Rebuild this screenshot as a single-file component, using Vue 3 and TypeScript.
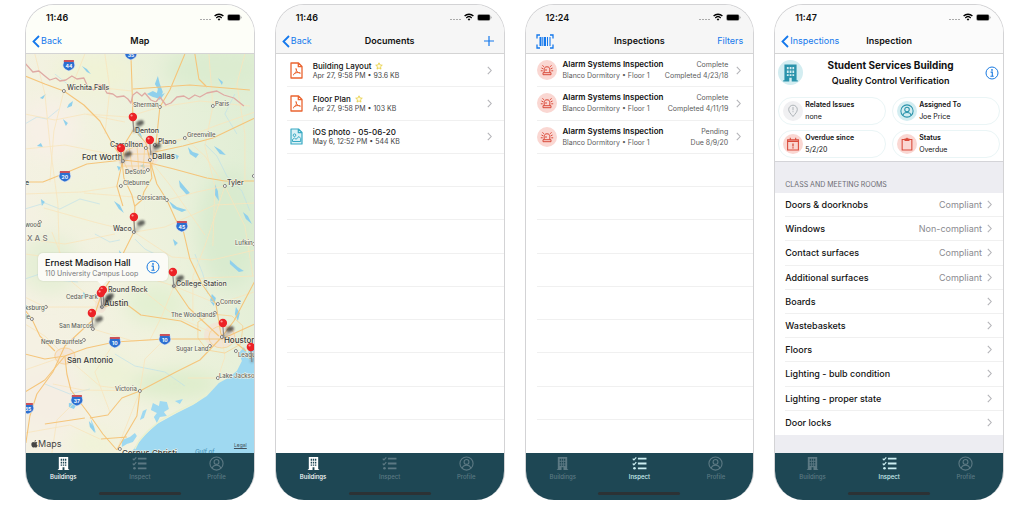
<script setup lang="ts">
interface Screen {
  kind: 'map' | 'documents' | 'inspections' | 'inspection'
  time: string
  title: string
  back?: string
  tab: string
}
interface Place {
  t: string
  x: number
  y: number
  c?: string
}

const screens: Screen[] = [
  { kind: 'map', time: '11:46', title: 'Map', back: 'Back', tab: 'Buildings' },
  { kind: 'documents', time: '11:46', title: 'Documents', back: 'Back', tab: 'Buildings' },
  { kind: 'inspections', time: '12:24', title: 'Inspections', tab: 'Inspect' },
  { kind: 'inspection', time: '11:47', title: 'Inspection', back: 'Inspections', tab: 'Inspect' },
]

const tabs = [
  { name: 'Buildings', icon: '#i-building' },
  { name: 'Inspect', icon: '#i-checklist' },
  { name: 'Profile', icon: '#i-profile' },
]

const documents = [
  { name: 'Building Layout', meta: 'Apr 27, 9:58 PM • 93.6 KB', star: true, icon: '#i-pdf', tone: 'pdf' },
  { name: 'Floor Plan', meta: 'Apr 27, 9:58 PM • 103 KB', star: true, icon: '#i-pdf', tone: 'pdf' },
  { name: 'iOS photo - 05-06-20', meta: 'May 6, 12:52 PM • 544 KB', star: false, icon: '#i-photo', tone: 'photo' },
]

const inspections = [
  { state: 'Complete', date: 'Completed 4/23/18' },
  { state: 'Complete', date: 'Completed 4/11/19' },
  { state: 'Pending', date: 'Due 8/9/20' },
]

const facts = [
  { label: 'Related Issues', value: 'none', icon: '#i-issue', tone: 'grey' },
  { label: 'Assigned To', value: 'Joe Price', icon: '#i-profile', tone: 'teal' },
  { label: 'Overdue since', value: '5/2/20', icon: '#i-calendar', tone: 'red' },
  { label: 'Status', value: 'Overdue', icon: '#i-clipboard', tone: 'red' },
]

const checks = [
  { name: 'Doors & doorknobs', value: 'Compliant' },
  { name: 'Windows', value: 'Non-compliant' },
  { name: 'Contact surfaces', value: 'Compliant' },
  { name: 'Additional surfaces', value: 'Compliant' },
  { name: 'Boards', value: '' },
  { name: 'Wastebaskets', value: '' },
  { name: 'Floors', value: '' },
  { name: 'Lighting - bulb condition', value: '' },
  { name: 'Lighting - proper state', value: '' },
  { name: 'Door locks', value: '' },
]

const places: Place[] = [
  { t: 'Wichita Falls', x: 42, y: 36, c: 'mid' },
  { t: 'Sherman', x: 108, y: 53 },
  { t: 'Paris', x: 190, y: 52 },
  { t: 'Denton', x: 110, y: 79, c: 'mid' },
  { t: 'Carrollton', x: 85, y: 93, c: 'mid' },
  { t: 'Plano', x: 133, y: 90, c: 'mid' },
  { t: 'Greenville', x: 162, y: 83 },
  { t: 'Fort Worth', x: 57, y: 106, c: 'big' },
  { t: 'Dallas', x: 127, y: 105, c: 'big' },
  { t: 'DeSoto', x: 100, y: 120 },
  { t: 'Cleburne', x: 98, y: 131 },
  { t: 'Corsicana', x: 112, y: 146 },
  { t: 'Tyler', x: 202, y: 131, c: 'mid' },
  { t: 'e', x: 0, y: 131, c: 'mid' },
  { t: 'wood', x: 0, y: 173 },
  { t: 'X A S', x: 2, y: 187, c: 'state' },
  { t: 'Waco', x: 88, y: 177, c: 'mid' },
  { t: 'Lufkin', x: 210, y: 191 },
  { t: 'College Station', x: 151, y: 232, c: 'mid' },
  { t: 'Round Rock', x: 83, y: 238, c: 'mid' },
  { t: 'Cedar Park', x: 41, y: 245 },
  { t: 'Austin', x: 79, y: 252, c: 'big' },
  { t: 'ksburg', x: 0, y: 256 },
  { t: 'le', x: 0, y: 265 },
  { t: 'Conroe', x: 195, y: 250 },
  { t: 'The Woodlands', x: 146, y: 263 },
  { t: 'San Marcos', x: 34, y: 274 },
  { t: 'New Braunfels', x: 16, y: 290 },
  { t: 'San Antonio', x: 42, y: 309, c: 'big' },
  { t: 'Houston', x: 199, y: 289, c: 'big' },
  { t: 'Sugar Land', x: 151, y: 297 },
  { t: 'League City', x: 213, y: 303 },
  { t: 'Lake Jackson', x: 194, y: 324 },
  { t: 'Victoria', x: 90, y: 337 },
  { t: 'Corpus Christi', x: 97, y: 402, c: 'big' },
  { t: 'Gulf of', x: 170, y: 400, c: 'sea' },
]

const dots = [
  [39, 37], [135, 53], [188, 52], [121, 94], [130, 91], [160, 84], [98, 107], [125, 106], [123, 116],
  [96, 132], [142, 146], [200, 132], [229, 122], [15, 168], [109, 178], [149, 232], [77, 253], [21, 253], [7, 265],
  [193, 250], [190, 259], [68, 275], [59, 286], [197, 283], [185, 292], [211, 297], [193, 324], [115, 337],
  [95, 395], [229, 190],
]

const pins = [
  [108, 63], [125, 86], [96, 94], [109, 163], [148, 218], [78, 236], [76, 239], [67, 259], [198, 269], [226, 293],
]

const shields = [
  [106, 0, '35'], [44, 11, '44'], [40, 122, '20'], [157, 172, '45'],
  [90, 288, '10'], [140, 285, '10'], [52, 346, '37'], [3, 354, '35'],
]

const lakes = [
  'M57 12 l5 3 4 5 -4-2z', 'M44 50 l4-3 -1 5 -5 2z', 'M15 44 l6-4 -3 5z', 'M133 22 l2 8 3 8 -3 8 -4-3 2-8 -3-5z', 'M122 40 l6-3 8 4 4-2 -4 6 -8-2z',
  'M193 24 l5 4 -1 3z', 'M163 93 l5 5 6 2 -3 4 -6-4z', 'M150 100 l4 2 -2 4z', 'M112 72 l4 8 2 6 -5-5z', 'M189 92 l7 4 5 5 -6-1z', 'M154 126 l5 6 6 7 -3 2 -7-8z',
  'M190 130 l3 7 1 10 -4-6z', 'M89 147 l6 4 4 8 -5-4z', 'M144 147 l8 6 10 3 -5 2 -9-4z', 'M218 158 l5 4 4 8 -6-5z', 'M16 145 l4 3 -3 4z',
  'M94 196 l4 5 -2 3z', 'M148 185 l5 4 -3 3z', 'M205 206 l8 7 6 4 -5 1 -9-8z', 'M187 240 l4 4 -2 8 -4-5z', 'M58 238 l6 4 -5 2z',
  'M44 349 l8 1 -3 5 -5-2z', 'M64 367 l5 6 1 6 -5-6z', 'M211 253 l4 6 -2 8 -3-7z', 'M12 92 l4-3 2 4z', 'M38 65 l5 4 -2 3z', 'M92 112 l4 1 -2 4z', 'M115 112 l4-2 1 4z',
]

const empties = 9
</script>

<template>
  <svg class="defs" aria-hidden="true">
    <symbol id="i-building" viewBox="0 0 14 16">
      <path fill="currentColor" fill-rule="evenodd" d="M2 1h10v13h1v1H8v-3H6v3H1v-1h1zM4 3v2h1.500V3zm2.300 0v2h1.500V3zm2.300 0v2H10V3zM4 6v2h1.500V6zm2.300 0v2h1.500V6zm2.300 0v2H10V6zM4 9v1.500h1.500V9zm2.300 0v1.500h1.500V9zm2.300 0v1.500H10V9z" />
    </symbol>
    <symbol id="i-checklist" viewBox="0 0 14 14">
      <g fill="none" stroke="currentColor"><path stroke-width="1.700" d="M5.500 2.500h8M5.500 7h8M5.500 11.500h8" /><path stroke-width="1.100" d="M.7 2.500l1.100 1.200L4 1.200M.7 7l1.100 1.200L4 5.700" /></g>
      <circle cx="2.300" cy="11.500" r="1.200" fill="currentColor" />
    </symbol>
    <symbol id="i-profile" viewBox="0 0 16 16">
      <g fill="none" stroke="currentColor" stroke-width="1.200"><circle cx="8" cy="8" r="7" /><circle cx="8" cy="6.300" r="2.600" /><path d="M3.500 13c.4-2.300 2-3.200 4.500-3.200s4.100.9 4.500 3.200" /></g>
    </symbol>
    <symbol id="i-chevron" viewBox="0 0 5 9">
      <path d="M.8.8l3.400 3.700L.8 8.200" fill="none" stroke="currentColor" stroke-width="1.100" />
    </symbol>
    <symbol id="i-back" viewBox="0 0 8 13">
      <path d="M7 1L1.500 6.500 7 12" fill="none" stroke="currentColor" stroke-width="1.800" />
    </symbol>
    <symbol id="i-pdf" viewBox="0 0 13 17">
      <g fill="none" stroke="currentColor" stroke-linejoin="round"><path stroke-width="1.300" d="M1 1h7.500L12 4.500V16H1zM8.300 1v3.700H12" /><path stroke-width="1" d="M6 6.500c1 2 .2 4.300-3 6.700M6 6.500c.2 2.600 1.700 4.300 4.500 4.700M3.800 11.700c2-1.200 4.200-1.500 6.500-.7" /></g>
    </symbol>
    <symbol id="i-photo" viewBox="0 0 13 17">
      <path d="M1 1h7.500L12 4.500V16H1z" fill="#d9f1f6" />
      <g fill="none" stroke="currentColor" stroke-linejoin="round"><path stroke-width="1.200" d="M1 1h7.500L12 4.500V16H1zM8.300 1v3.700H12" /><circle cx="4.500" cy="7.200" r="1.300" /><path d="M2.500 13.500v-2l2-1.500 1.500 1.300L9 8.500l1.700 2v3z" /></g>
    </symbol>
    <symbol id="i-star" viewBox="0 0 10 10">
      <path d="M5 1l1.200 2.700 2.900.3-2.200 2 .6 2.900L5 7.400 2.500 8.900 3.100 6 .9 4l2.900-.3z" fill="#fffbe0" stroke="currentColor" stroke-width=".9" />
    </symbol>
    <symbol id="i-alarm" viewBox="0 0 14 12">
      <g fill="none" stroke="currentColor" stroke-width="1"><path d="M4.200 8.500V5.200c0-1.600 1-2.400 2.800-2.400s2.800.8 2.800 2.400v3.300M6 7V5M1.500 4l1.700.8M.8 6.800h1.900M2.500 1.300l1.300 1.500M12.500 4l-1.700.8M13.200 6.800h-1.900M11.500 1.300l-1.300 1.500" /><path d="M3 8.700h8v2H3z" /></g>
    </symbol>
    <symbol id="i-barcode" viewBox="0 0 18 15">
      <g fill="none" stroke="currentColor"><path stroke-width="1.300" d="M4 1H1v3.500M14 1h3v3.500M4 14H1v-3.500M14 14h3v-3.500" /><path stroke-width="2" d="M4.500 3v9M9 3v9" /><path stroke-width="1.100" d="M6.800 3v9M11.500 3v9M14 3v9" /></g>
    </symbol>
    <symbol id="i-info" viewBox="0 0 14 14">
      <circle cx="7" cy="7" r="6" fill="none" stroke="currentColor" /><circle cx="7" cy="3.900" r=".9" fill="currentColor" /><path d="M5.600 6.100h1.700v4M5.400 10.200h3.300" fill="none" stroke="currentColor" stroke-width="1.100" />
    </symbol>
    <symbol id="i-issue" viewBox="0 0 12 14">
      <g fill="none" stroke="currentColor" stroke-width=".9"><path d="M6 12.500C3.500 9.500 1.700 7.800 1.700 5.500a4.300 4.300 0 0 1 8.600 0c0 2.300-1.800 4-4.300 7z" /><path d="M6 3v3.300M6 7.200v1" /></g>
    </symbol>
    <symbol id="i-calendar" viewBox="0 0 12 13">
      <g fill="none" stroke="currentColor"><path d="M1 2.500h10v9.500H1zM3.500.8v2M8.500.8v2" /><path stroke-width="1.400" d="M1 4h10" /><path stroke-width="1.200" d="M6 6v2.800M6 9.500v1.200" /></g>
    </symbol>
    <symbol id="i-clipboard" viewBox="0 0 11 13">
      <path d="M1 2.300h9V12H1z" fill="none" stroke="currentColor" /><path d="M3.200 1.500h1.300L5.500.4l1 1.100h1.300v2.300H3.200z" fill="currentColor" />
    </symbol>
    <symbol id="i-wifi" viewBox="0 0 10 8">
      <g fill="none" stroke="#000" stroke-width="1.400"><path d="M.6 3a6.300 6.300 0 0 1 8.800 0M2.300 4.900a3.900 3.900 0 0 1 5.400 0" /></g><path d="M3.700 6.200a1.900 1.900 0 0 1 2.600 0L5 7.700z" />
    </symbol>
    <symbol id="i-battery" viewBox="0 0 15 7">
      <rect x=".3" y=".3" width="13" height="6.400" rx="1.800" fill="#777" /><rect x="1" y="1" width="11.600" height="5" rx="1" /><path d="M13.800 2.200c.9.300.9 2.300 0 2.600z" fill="#777" />
    </symbol>
    <symbol id="i-apple" viewBox="0 0 8 9">
      <path d="M5.700 0c.1 1-.7 1.900-1.700 1.900C3.900 1 4.700.1 5.700 0zM4.100 2.500c.4 0 .9-.4 1.700-.4.700 0 1.200.3 1.500.8-1.300.8-1.100 2.600.3 3.200C7.100 7.500 6.400 8.600 5.700 8.600c-.6 0-.8-.3-1.500-.3s-.9.300-1.400.3C1.600 8.700.3 6.500.4 4.700.5 3.100 1.500 2.200 2.500 2.200c.7 0 1.200.3 1.600.3z" fill="#444" />
    </symbol>
  </svg>

  <main class="gallery">
    <section v-for="s in screens" :key="s.kind" class="phone" :class="s.kind">
      <header class="top">
        <div class="status">
          <span class="time">{{ s.time }}</span>
          <span class="signal"><i v-for="n in 4" :key="n"></i></span>
          <svg class="wifi"><use href="#i-wifi" /></svg>
          <svg class="battery"><use href="#i-battery" /></svg>
        </div>
        <nav class="bar">
          <button v-if="s.back" class="link" type="button"><svg class="back"><use href="#i-back" /></svg>{{ s.back }}</button>
          <button v-else class="link scan" type="button" aria-label="Scan"><svg class="barcode"><use href="#i-barcode" /></svg></button>
          <h1>{{ s.title }}</h1>
          <button v-if="s.kind === 'documents'" class="link end" type="button" aria-label="Add"><svg class="plus" viewBox="0 0 10 10"><path d="M5 0v10M0 5h10" stroke="currentColor" stroke-width="1.200" /></svg></button>
          <button v-else-if="s.kind === 'inspections'" class="link end" type="button">Filters</button>
          <span v-else></span>
        </nav>
      </header>

      <div v-if="s.kind === 'map'" class="map">
        <svg class="canvas" viewBox="0 0 230 399" preserveAspectRatio="xMidYMid slice">
          <defs>
            <linearGradient id="land" x1="0" y1=".6" x2="1" y2=".2">
              <stop offset="0" stop-color="#f5f1e3" /><stop offset=".45" stop-color="#f0f2de" /><stop offset="1" stop-color="#e0eed5" />
            </linearGradient>
            <filter id="soft" x="-50%" y="-50%" width="200%" height="200%"><feGaussianBlur stdDeviation="9" /></filter>
            <filter id="shade" x="-50%" y="-50%" width="200%" height="200%"><feGaussianBlur stdDeviation="1" /></filter>
          </defs>
          <rect width="230" height="399" fill="url(#land)" />
          <g filter="url(#soft)">
            <ellipse cx="25" cy="75" rx="30" ry="30" fill="#f7f0e6" /><ellipse cx="70" cy="20" rx="40" ry="18" fill="#f0f3d6" />
            <ellipse cx="190" cy="15" rx="50" ry="22" fill="#dcecd0" /><ellipse cx="205" cy="175" rx="32" ry="60" fill="#d9ebcf" />
            <ellipse cx="25" cy="210" rx="30" ry="30" fill="#e5efd5" /><ellipse cx="60" cy="150" rx="40" ry="20" fill="#f0f3dc" />
            <ellipse cx="130" cy="250" rx="30" ry="20" fill="#e3f0d2" /><ellipse cx="150" cy="330" rx="45" ry="15" fill="#deedcc" />
            <ellipse cx="25" cy="345" rx="30" ry="30" fill="#f5eee3" /><ellipse cx="85" cy="320" rx="25" ry="20" fill="#edf2d7" /><ellipse cx="70" cy="390" rx="25" ry="15" fill="#f0f3d8" />
          </g>
          <g fill="#f3e4d6" opacity=".8"><ellipse cx="113" cy="102" rx="21" ry="15" /><ellipse cx="40" cy="302" rx="11" ry="9" /><ellipse cx="195" cy="281" rx="16" ry="13" /><ellipse cx="76" cy="251" rx="6" ry="8" /></g>
          <path fill="#9fd9f1" d="M106 399l5-7 9-11 12-11 20-11 16-8 14-9 12-13 9-5 9-7 5-10-3-8 5-6 4 7 2-10 5 4v117z" />
          <path fill="#9fd9f1" d="M128 349l6 3 1-5 7 1 2 7-5 3 3 4-7 1-3 6-3-6 3-4-6-3zM97 386l8-3 5-4 2 3-4 6-6 2-5 3zM66 365l3 7 2 7-4-5zM150 347l8-2-3 5zM115 366l3-9 4-2-3 9z" />
          <path fill="none" stroke="#eaf1cf" stroke-width="1.500" d="M110 395l4-8 9-10 13-11 17-9 18-9 11-9" />
          <path v-for="l in lakes" :key="l" :d="l" fill="#8fd0ec" />
          <g fill="none" stroke="#b9dfec" stroke-width=".6">
            <path d="M0 70l12-7 10 2 12-10M0 155l20-6 15 6 20-10 20 5M70 180l15 8 10-2M110 185l10 10 12 6 8 14 10 8M170 200l8 20 5 20M180 90l12 12 10 20 15 15 8 20M0 225l15-5 18 6 20 2M20 330l25 10 20-5M90 300l20 12 30 6 20 14M210 40l-10 20 12 20M30 20l15 12 15 3" />
          </g>
          <g fill="none" stroke="#f9e4bd" stroke-width=".8">
            <path d="M0 60l30 6 30-6 40 8M10 0l10 40 5 50 8 60 2 70M39 37l-10 40-4 51M60 0l-12 30M39 37l30-4 38 4M0 95l40-4 50 10M62 60l40 3 33-10 40-6 50 5M188 52l-4-52M188 52l-8 40 10 40-2 60M160 84l20 18 20 30M125 100l35-16 30-12 40-14M130 91l30-7M142 146l30-8 28-6M142 146l-33-3-50-4M96 132l-40 6-56 2M110 178l30-5 50-22 40-2M109 178l-40-10-50-14M109 178l38 25 40 3 43-10M90 218l-60-14-30-4M77 253l-30-25-20-50M77 253l-57 0-20-10M40 302l-20-20-20-12M68 275l40 12 30-2M100 210l30 16 19 6 30-8 50-2M149 232l44 18 36-12M149 232l-12 30-12 24M197 283l-47-21-40-32M140 285l-20 20-5 32M90 288l-20 30 15 40M40 302l-40 14M40 302l35 30 40 5M28 330l30 6 57 1M52 346l-20 20-5 33M75 385l-30-14-45 8M92 396l23-59M197 283l3 20-7 21-30 0M200 132l20 40 8 50M200 132l-20 60-12 30 0 45M125 106l20 25 35 50M220 0l-8 30 8 50 0 50M80 0l5 35-5 45M0 185l40 5 50-10" />
            <path stroke="#f7d293" d="M98 106l4-10 10-4 12 2 6 8-4 12-10 6-12-2zM30 302a10 8 0 1 0 20 0a10 8 0 1 0-20 0M184 283a13 11 0 1 0 26 0a13 11 0 1 0-26 0M173 268l14-8 20 2 11 10-2 18-16 9-18-3-9-12zM98 100h32M104 92l4 26M112 90l2 28M120 92l-2 26M96 112h32" />
          </g>
          <g fill="none" stroke="#f5c57b" stroke-width="1.100" stroke-linejoin="round">
            <path d="M106 0l1 28 1 35 1 12-8 13-4 18 2 18 8 17 3 12-1 25-10 20-6 16-16 25-9 27-13 12-15 14-12 26-16 22-7 22-4 27" />
            <path d="M109 75l12 14 4 17 2 18-8 14-2 8-7 6M125 106l7 24 10 16 9 20 7 9 7 30 12 25 14 20 5 30 14 8 11 9" />
            <path d="M0 128h18l20-8 24-10 36-4 27 3 24 6 33 9 18 3h30M40 302l22-8 28-6 50-3h57l33-15M40 302l2 18 4 16 18 24 14 20 14 16M197 283l-22 23-24 12-36 19-18 7-14 17-18 3M0 22l20 8 19 7 20 14 16 16 12 22 11 17M0 300l20 5 20-3M0 256l7 9 8 17 15 15" />
            <path d="M135 53l10-17 15-36M108 35l57-4 60 5M135 53l-4 38M170 0l4 25 8 8M77 253l23-4 16 12 40 6 20 10M149 232l15 22 30 28M92 396l20-34 3-25M60 364l-40 6M197 283l12-16 21-40M98 106l-6 26 6 20M40 302l-20 24-20 12M76 385l26-2M230 64l-42 20-30 8-28 6" />
          </g>
          <path fill="none" stroke="#dfaaa4" stroke-width="1.300" stroke-linejoin="round" d="M0 9l8 9 6-1 6 5 5 4 6-2 4 3 6-1 6-4 5 3 7-1 4 9 6 3 4-5 5 1 4 7 6 1 4 3 7-1 4 3 3 4 2-8 4-3 5 4 3-3 6 7 5 2 4-5 6 8 5-2 6-6 7-1 5 3 6-4 5 2 7-4 10-2 7 4 10 3 10 8" />
          <circle v-for="(d, i) in dots" :key="'d' + i" :cx="d[0]" :cy="d[1]" r="1.500" fill="#fff" stroke="#666" stroke-width=".8" />
          <g v-for="(h, i) in shields" :key="'s' + i" :transform="`translate(${h[0]} ${h[1]})`">
            <path d="M-5-4h10l1 4c0 3-3 5-6 6-3-1-6-3-6-6z" fill="#2c6fd0" stroke="#e6ecf4" stroke-width=".7" /><path d="M-5-5h10v2H-5z" fill="#c9525b" />
            <text class="num" x="0" y="3">{{ h[2] }}</text>
          </g>
          <text v-for="p in places" :key="p.t" :x="p.x" :y="p.y" class="place" :class="p.c">{{ p.t }}</text>
          <g v-for="(p, i) in pins" :key="'p' + i" :transform="`translate(${p[0]} ${p[1]})`">
            <path d="M1 14L9 6" stroke="#333" stroke-width="4" stroke-linecap="round" opacity=".2" filter="url(#shade)" /><ellipse cx="7" cy="6" rx="4" ry="2.500" transform="rotate(-20 7 6)" fill="#222" opacity=".65" filter="url(#shade)" />
            <path d="M0 3l1 12" stroke="#8c8c8c" stroke-width="1.200" /><circle r="4.200" fill="#ec2227" /><circle cx="-1.300" cy="-1.500" r="1.100" fill="#ff9c98" />
          </g>
        </svg>
        <div class="callout">
          <div><strong>Ernest Madison Hall</strong><small>110 University Campus Loop</small></div>
          <button class="link" type="button" aria-label="Building details"><svg class="info"><use href="#i-info" /></svg></button>
        </div>
        <span class="brand"><svg class="apple"><use href="#i-apple" /></svg>Maps</span>
        <a class="legal" href="#legal">Legal</a>
      </div>

      <ul v-else-if="s.kind === 'documents'" class="rows">
        <li v-for="d in documents" :key="d.name">
          <button class="row" type="button">
            <svg class="file" :class="d.tone"><use :href="d.icon" /></svg>
            <span class="text"><span class="name">{{ d.name }}<svg v-if="d.star" class="star"><use href="#i-star" /></svg></span><span class="meta">{{ d.meta }}</span></span>
            <svg class="chev"><use href="#i-chevron" /></svg>
          </button>
        </li>
        <li v-for="n in empties" :key="n"></li>
      </ul>

      <ul v-else-if="s.kind === 'inspections'" class="rows">
        <li v-for="d in inspections" :key="d.date">
          <button class="row" type="button">
            <span class="disc red"><svg class="alarm"><use href="#i-alarm" /></svg></span>
            <span class="text"><span class="line"><b>Alarm Systems Inspection</b><span>{{ d.state }}</span></span><span class="line"><span>Blanco Dormitory • Floor 1</span><span>{{ d.date }}</span></span></span>
            <svg class="chev"><use href="#i-chevron" /></svg>
          </button>
        </li>
        <li v-for="n in empties" :key="n"></li>
      </ul>

      <div v-else class="detail">
        <div class="summary">
          <div class="heading">
            <span class="disc teal large"><svg class="tower"><use href="#i-building" /></svg></span>
            <div class="names"><h2>Student Services Building</h2><h3>Quality Control Verification</h3></div>
            <button class="link" type="button" aria-label="Building details"><svg class="info"><use href="#i-info" /></svg></button>
          </div>
          <div class="facts">
            <button v-for="f in facts" :key="f.label" class="fact" type="button">
              <span class="disc" :class="f.tone"><svg class="glyph"><use :href="f.icon" /></svg></span>
              <span class="text"><b>{{ f.label }}</b><span>{{ f.value }}</span></span>
            </button>
          </div>
        </div>
        <h4>CLASS AND MEETING ROOMS</h4>
        <ul class="checks">
          <li v-for="c in checks" :key="c.name">
            <button class="check" type="button"><span>{{ c.name }}</span><span class="value">{{ c.value }}</span><svg class="chev"><use href="#i-chevron" /></svg></button>
          </li>
        </ul>
      </div>

      <footer class="tabs">
        <div class="tabrow">
          <button v-for="t in tabs" :key="t.name" type="button" :class="{ on: t.name === s.tab }"><svg><use :href="t.icon" /></svg>{{ t.name }}</button>
        </div>
        <div class="home"></div>
      </footer>
    </section>
  </main>
</template>

<style>
body { margin: 0; background: #fff; }
</style>

<style scoped>
* { box-sizing: border-box; }
.defs { position: absolute; width: 0; height: 0; }
.gallery { display: grid; grid-template-columns: repeat(4, minmax(0, 1fr)); gap: 20px; min-height: 100vh; padding: 4px 22px 5px 25px; font-family: Inter, "Liberation Sans", sans-serif; color: #111; }
.phone { display: flex; flex-direction: column; border: 1px solid #d3d3d5; border-bottom: 0; border-radius: 29px; overflow: hidden; background: #fff; }
button { margin: 0; padding: 0; border: 0; background: none; font: inherit; color: inherit; text-align: left; }
h1, h2, h3, h4, ul { margin: 0; padding: 0; list-style: none; }
svg { flex: none; }
.top { height: 49px; background: #f6f6f6; border-bottom: 1px solid #d4d4d4; }
.phone.map .top { background: #fdfef8; }
.inspection .top { background: #fbfbfb; }
.status { display: flex; align-items: center; height: 24px; padding: 0 12px 0 20px; }
.time { flex: 1; font-size: 9px; font-weight: 600; }
.signal { display: flex; gap: 1px; margin: 4px 3px 0 0; }
.signal i { width: 2px; height: 1px; background: #aaa; }
.wifi { width: 10px; height: 8px; margin-right: 3px; }
.battery { width: 15px; height: 7px; }
.bar { display: grid; grid-template-columns: 1fr auto 1fr; align-items: center; height: 24px; padding: 0 10px 0 6px; }
.bar h1 { padding-left: 4px; font-size: 9px; font-weight: 600; line-height: 12px; }
.link { display: flex; align-items: center; gap: 1px; font-size: 9px; line-height: 12px; color: #1478ec; }
.end { justify-self: end; }
.back { width: 8px; height: 13px; }
.scan { padding-left: 4px; }
.barcode { width: 18px; height: 15px; }
.plus { width: 10px; height: 10px; }
.phone > .map { position: relative; flex: 1; overflow: hidden; }
.canvas { position: absolute; inset: 0; width: 100%; height: 100%; }
.place { font-size: 6px; font-weight: 500; fill: #63655f; stroke: #f8f7e8; stroke-width: 1px; paint-order: stroke; }
.mid { font-size: 7px; font-weight: 500; fill: #484a47; }
.big { font-size: 8px; font-weight: 500; fill: #383a38; }
.state { font-size: 8px; fill: #777; }
.sea { font-size: 6px; font-style: italic; fill: #4a93b8; stroke: none; }
.num { font-size: 5px; font-weight: 700; fill: #fff; text-anchor: middle; }
.callout { position: absolute; left: 12px; top: 199px; display: flex; align-items: center; gap: 8px; height: 28px; padding: 0 8px 0 7px; border-radius: 5px; background: #fbfbf6; box-shadow: 0 0 2px #0002; white-space: nowrap; }
.callout::after { content: ""; position: absolute; left: 60px; bottom: -3px; width: 8px; height: 8px; background: #fbfbf6; transform: rotate(45deg); }
.callout strong, .callout small { display: block; }
.callout strong { font-size: 9px; font-weight: 500; line-height: 12px; }
.callout small { font-size: 7px; line-height: 9px; color: #77787a; }
.info { width: 14px; height: 14px; color: #1a7ae0; }
.brand { position: absolute; left: 5px; bottom: 3px; display: flex; align-items: center; font-size: 9px; line-height: 12px; color: #444; }
.apple { width: 7px; height: 8px; }
.legal { position: absolute; right: 7px; bottom: 4px; font-size: 5px; line-height: 8px; color: #44515a; }
.rows { flex: 1; display: grid; grid-auto-rows: minmax(0, 1fr); }
.rows li { margin-left: 11px; border-bottom: 1px solid #f0f0f0; }
.rows li:last-child { border-bottom: 0; }
.row { display: flex; align-items: center; width: 100%; height: 100%; padding-right: 12px; }
.chev { width: 5px; height: 9px; color: #b4b4b8; }
.row .text { flex: 1; display: flex; flex-direction: column; }
.file { width: 13px; height: 17px; margin: 0 10px 0 3px; }
.pdf { color: #ea6430; }
.photo { color: #38a9c3; }
.name { display: flex; align-items: center; gap: 4px; font-size: 8px; font-weight: 500; line-height: 10px; }
.star { width: 8px; height: 8px; color: #e3c92a; }
.meta { font-size: 7px; line-height: 9px; color: #454545; }
.disc { display: flex; flex: none; align-items: center; justify-content: center; width: 20px; height: 20px; border-radius: 50%; }
.red { background: #fad7d2; color: #d94a3a; }
.teal { background: #d3edf1; color: #2a93ab; }
.grey { background: #f0f0f2; color: #a6adb1; }
.alarm { width: 14px; height: 12px; }
.row .disc { margin-right: 6px; }
.line { display: flex; justify-content: space-between; font-size: 7px; line-height: 11px; color: #5b5b5b; white-space: nowrap; }
.line b { font-size: 8px; font-weight: 600; color: #111; }
.inspections .row .text { margin-right: 8px; }
.detail { flex: 1; display: flex; flex-direction: column; background: #ededf2; }
.summary { padding: 0 3px 3px; background: #fff; border-bottom: 1px solid #d4d4d8; }
.heading { display: flex; align-items: center; height: 37px; padding-right: 1px; }
.large { width: 25px; height: 25px; }
.tower { width: 17px; height: 20px; }
.names { flex: 1; padding-right: 7px; text-align: center; white-space: nowrap; }
h2 { font-size: 10px; font-weight: 700; line-height: 15px; }
h3 { font-size: 9px; font-weight: 600; line-height: 15px; }
.facts { display: grid; grid-template-columns: 1fr 1fr; gap: 5px 6px; padding-top: 6px; }
.fact { display: flex; align-items: center; gap: 2px; height: 28px; padding-left: 4px; border: 1px solid #eaf5f6; border-radius: 14px; }
.fact .text { display: flex; flex-direction: column; font-size: 7px; line-height: 12px; white-space: nowrap; }
.fact b { font-weight: 600; }
.glyph { width: 14px; height: 14px; }
h4 { height: 31px; padding: 17px 10px 0; font-size: 7px; font-weight: 400; line-height: 12px; color: #6c6c72; }
.checks { flex: 1; display: grid; grid-auto-rows: minmax(0, 1fr); margin-bottom: 18px; background: #fff; }
.checks li { margin-left: 10px; border-bottom: 1px solid #f0f0f0; }
.checks li:last-child { border-bottom: 0; }
.check { display: flex; align-items: center; width: 100%; height: 100%; padding-right: 11px; font-size: 9px; font-weight: 500; }
.value { margin-left: auto; margin-right: 5px; font-weight: 400; color: #8b8b90; }
.tabs { height: 47px; margin: 0 -1px; background: #1e4754; }
.tabrow { display: grid; grid-template-columns: repeat(3, 1fr); height: 39px; }
.tabrow button { display: flex; flex-direction: column; align-items: center; padding-top: 3px; font-size: 6px; font-weight: 500; line-height: 9px; color: #5c7983; }
.tabrow svg { width: 15px; height: 15px; margin-bottom: 1px; }
.tabrow .on { color: #fff; }
.inspections .tabrow .on, .inspection .tabrow .on { color: #cdeff2; }
.home { width: 82px; height: 3px; margin: 0 auto; border-radius: 2px; background: #2c3235; }
</style>
